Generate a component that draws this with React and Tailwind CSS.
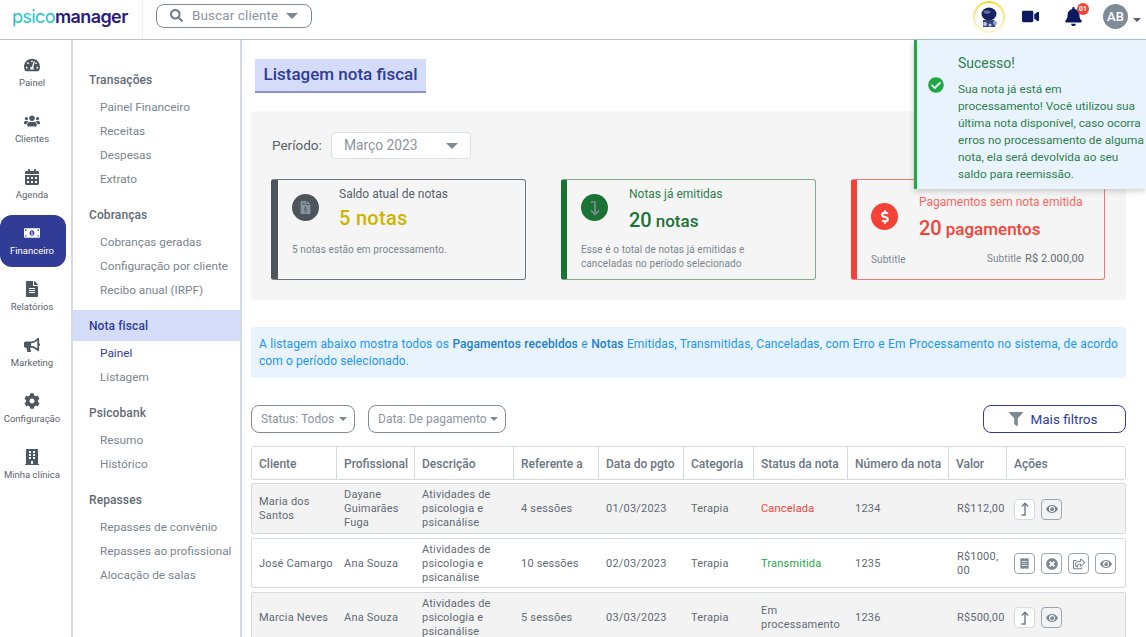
import {
  FaTachometerAlt, FaUsers, FaCalendarAlt, FaMoneyBillAlt, FaFileAlt, FaBullhorn, FaCog, FaBuilding,
  FaSearch, FaVideo, FaBell, FaFilter, FaEye, FaTimesCircle, FaRegShareSquare, FaCheckCircle, FaDollarSign, FaFileInvoiceDollar, FaReceipt,
} from 'react-icons/fa'

const rail = [
  { icon: FaTachometerAlt, label: 'Painel' },
  { icon: FaUsers, label: 'Clientes' },
  { icon: FaCalendarAlt, label: 'Agenda' },
  { icon: FaMoneyBillAlt, label: 'Financeiro', active: true },
  { icon: FaFileAlt, label: 'Relatórios' },
  { icon: FaBullhorn, label: 'Marketing' },
  { icon: FaCog, label: 'Configuração' },
  { icon: FaBuilding, label: 'Minha clínica' },
]

const menu = [
  { title: 'Transações', items: ['Painel Financeiro', 'Receitas', 'Despesas', 'Extrato'] },
  { title: 'Cobranças', items: ['Cobranças geradas', 'Configuração por cliente', 'Recibo anual (IRPF)'] },
  { title: 'Nota fiscal', items: ['Painel', 'Listagem'], active: true },
  { title: 'Psicobank', items: ['Resumo', 'Histórico'] },
  { title: 'Repasses', items: ['Repasses de convênio', 'Repasses ao profissional', 'Alocação de salas'] },
]

const headers = ['Cliente', 'Profissional', 'Descrição', 'Referente a', 'Data do pgto', 'Categoria', 'Status da nota', 'Número da nota', 'Valor', 'Ações']

const rows = [
  { cliente: 'Maria dos Santos', prof: 'Dayane Guimarães Fuga', ref: '4 sessões', data: '01/03/2023', status: 'Cancelada', statusClass: 'text-[#f44336]', num: '1234', valor: 'R$112,00', actions: 'short', bg: 'bg-[#f3f3f3]', h: 'h-[51px]' },
  { cliente: 'José Camargo', prof: 'Ana Souza', ref: '10 sessões', data: '02/03/2023', status: 'Transmitida', statusClass: 'text-[#22a745]', num: '1235', valor: 'R$1000,\u200b00', actions: 'long', bg: 'bg-white', h: 'h-[50px]' },
  { cliente: 'Marcia Neves', prof: 'Ana Souza', ref: '5 sessões', data: '03/03/2023', status: 'Em processamento', statusClass: 'text-[#5f6a74]', num: '1236', valor: 'R$500,00', actions: 'short', bg: 'bg-[#f3f3f3]', h: 'h-[50px]' },
]

const gridCols = 'grid grid-cols-[85px_78px_99px_85px_85px_70px_94px_101px_58px_1fr]'

function Caret({ color }) {
  return <span className={`ml-auto inline-block w-0 h-0 border-x-[6px] border-x-transparent border-t-[6px] ${color}`} />
}

function SmallCaret({ color }) {
  return <span className={`ml-auto inline-block w-0 h-0 border-x-[4px] border-x-transparent border-t-[4px] ${color}`} />
}

function ActionBtn({ children, strong }) {
  return (
    <span className={`flex items-center justify-center w-[21px] h-[21px] rounded-[4px] border text-[#7b8791] ${strong ? 'border-[#9aa5ae]' : 'border-[#d5dade] bg-white'}`}>
      {children}
    </span>
  )
}

function UpArrow() {
  return (
    <svg width="14" height="16" viewBox="0 0 14 16" fill="none" stroke="#6f7b85" strokeWidth="1.4">
      <path d="M3.5 14H7V2.5M3.8 5.5 7 2.2l3.2 3.3" />
    </svg>
  )
}

function Actions({ kind }) {
  if (kind === 'short') {
    return (
      <div className="flex gap-[6px]">
        <ActionBtn><UpArrow /></ActionBtn>
        <ActionBtn strong><FaEye size={12} /></ActionBtn>
      </div>
    )
  }
  return (
    <div className="flex gap-[6px]">
      <ActionBtn strong><FaReceipt size={11} /></ActionBtn>
      <ActionBtn strong><FaTimesCircle size={12} /></ActionBtn>
      <ActionBtn strong><FaRegShareSquare size={12} /></ActionBtn>
      <ActionBtn strong><FaEye size={12} /></ActionBtn>
    </div>
  )
}

function Astronaut() {
  return (
    <div className="w-8 h-8 rounded-full p-[2px] bg-linear-to-b from-[#f5d92e] to-[#fdf6d0]">
      <div className="w-full h-full rounded-full bg-white flex items-center justify-center">
        <svg width="24" height="24" viewBox="0 0 24 24">
          <ellipse cx="12" cy="9" rx="7.5" ry="6.5" fill="#1a2360" />
          <ellipse cx="10" cy="7" rx="3.5" ry="1.8" fill="#5f6eaa" />
          <path d="M6 15h11l2 3-1 4H6z" fill="#39447f" />
          <circle cx="8" cy="19" r="2" fill="#c3cae2" />
          <circle cx="13" cy="20" r="1.5" fill="#c3cae2" />
          <circle cx="18" cy="18" r="2" fill="#9aa5cc" />
        </svg>
      </div>
    </div>
  )
}

export default function App() {
  return (
    <div className="h-screen overflow-hidden relative flex flex-col bg-white font-['Roboto',sans-serif] text-[#5f6a74]">
      {/* Top bar */}
      <header className="h-10 shrink-0 flex items-center border-b border-[#b9c3cc]">
        <div className="w-[143px] h-full pl-3 pb-[6px] flex items-center border-r border-[#eef0f2] font-['Inter',sans-serif] text-[18px] font-semibold tracking-[-0.6px]">
          <span className="text-[#1cc6cf] font-normal">psico</span>
          <span className="text-[#2a1a80]">manager</span>
        </div>
        <div className="ml-[13px] mb-2 w-[156px] h-6 flex items-center rounded-lg border border-[#7f8b96] pl-[13px] pr-[13px] text-[#8a95a0]">
          <FaSearch size={13} className="text-[#6f7b86]" />
          <span className="ml-[9px] text-[13.5px] tracking-[0.1px]">Buscar cliente</span>
          <Caret color="border-t-[#7c8893]" />
        </div>
        <div className="ml-auto flex items-center pr-[5px] mb-[6px]">
          <Astronaut />
          <FaVideo size={17} className="ml-[17px] text-[#0b1a5e]" />
          <div className="relative ml-[25px]">
            <FaBell size={19} className="text-[#0b1a5e]" />
            <span className="absolute -top-[4px] -right-[6px] w-3 h-3 rounded-full bg-[#f44336] text-white text-[7px] font-bold leading-3 text-center">01</span>
          </div>
          <div className="ml-[20px] w-[25px] h-[25px] rounded-full bg-[#7f8c97] text-white text-[13px] font-medium flex items-center justify-center">AB</div>
          <span className="ml-[5px] w-2"><SmallCaret color="border-t-[#56616b]" /></span>
        </div>
      </header>

      <div className="flex flex-1 min-h-0">
        {/* Icon rail */}
        <nav className="w-[73px] shrink-0 border-r-2 border-[#d3dae3] pt-[7px] pr-[5px] flex flex-col gap-1">
          {rail.map(({ icon: Icon, label, active }) => (
            <div key={label} className={`h-[52px] pr-[2px] pt-[2px] flex flex-col items-center justify-center gap-[3px] text-[9.5px] ${active ? 'bg-[#303c95] text-white rounded-xl' : 'text-[#59646e]'}`}>
              <Icon size={16} className={active ? 'text-white' : 'text-[#4d5760]'} />
              <span>{label}</span>
            </div>
          ))}
        </nav>

        {/* Secondary menu */}
        <aside className="w-[169px] shrink-0 border-r-2 border-[#d3dae3] pt-6">
          {menu.map((group) => (
            <div key={group.title} className="mb-2">
              <div className={`h-[31px] pl-4 flex items-center text-[12px] font-medium tracking-[0.1px] ${group.active ? 'bg-[#d5dcfa] text-[#303c95]' : 'text-[#5f6a74]'}`}>
                {group.title}
              </div>
              {group.items.map((item, i) => (
                <div key={item} className={`h-6 pl-[27px] pt-[1px] flex items-center text-[11.8px] ${group.active && i === 0 ? 'text-[#303c95]' : 'text-[#7a858f]'}`}>
                  {item}
                </div>
              ))}
            </div>
          ))}
        </aside>

        {/* Content */}
        <main className="flex-1 min-w-0 pl-[9px] pr-5 pt-[19px]">
          <h1 className="ml-1 w-[171px] h-[34px] bg-[#d5dcfa] border-b-2 border-[#8a93c9] text-[#303c95] text-[17px] font-medium flex items-center justify-center">
            Listagem nota fiscal
          </h1>

          <section className="mt-[18px] h-[189px] bg-[#f5f5f5] rounded-[4px] px-5 pt-[21px]">
            <div className="flex items-center h-[27px]">
              <span className="ml-[1px] w-[50px] whitespace-nowrap text-[13.5px] text-[#56616b]">Período:</span>
              <div className="ml-[9px] w-[140px] h-[27px] bg-white rounded-[4px] border border-[#d9dee2] flex items-center pl-[12px] pr-3 text-[13.8px] text-[#8a95a0]">
                Março 2023
                <Caret color="border-t-[#7c8893]" />
              </div>
            </div>

            <div className="mt-5 flex justify-between pr-[1px]">
              <div className="w-[255px] h-[101px] rounded-[3px] border border-[#6b747c] border-l-[7px] border-l-[#4c555c] pl-[14px] pr-2 pt-[5px]">
                <div className="flex gap-[20px]">
                  <span className="mt-[9px] w-[27px] h-[27px] rounded-full bg-[#4c555c] flex items-center justify-center text-[#8592a0]">
                    <FaFileInvoiceDollar size={13} />
                  </span>
                  <div>
                    <div className="text-[12px] text-[#56616b]">Saldo atual de notas</div>
                    <div className="text-[20px] font-medium tracking-[0.3px] text-[#cdb400]">5 notas</div>
                  </div>
                </div>
                <p className="mt-[9px] text-[10px] tracking-[0.1px] text-[#7a858f]">5 notas estão em processamento.</p>
              </div>

              <div className="w-[255px] h-[101px] rounded-[3px] border border-[#7fae8c] border-l-[6px] border-l-[#1b7235] pl-[14px] pr-2 pt-[5px]">
                <div className="flex gap-[21px]">
                  <span className="mt-[9px] w-[27px] h-[27px] rounded-full bg-[#1b7235] flex items-center justify-center">
                    <svg width="14" height="16" viewBox="0 0 14 16" fill="none" stroke="#7f8c97" strokeWidth="1.6">
                      <path d="M3 2h4v12M3 10.5 7 14.5l4-4" />
                    </svg>
                  </span>
                  <div>
                    <div className="text-[12px] text-[#2e8049]">Notas já emitidas</div>
                    <div className="mt-[3px] font-medium text-[#1b7235] leading-7">
                      <span className="text-[20px]">20</span> <span className="text-[17px]">notas</span>
                    </div>
                  </div>
                </div>
                <p className="mt-[7px] w-[190px] text-[10px] leading-[14px] tracking-[0.1px] text-[#7a858f]">
                  Esse é o total de notas já emitidas e canceladas no período selecionado
                </p>
              </div>

              <div className="w-[254px] h-[101px] rounded-[3px] border border-[#f2776d] border-l-[6px] border-l-[#f44336] pl-[14px] pr-[20px] pt-[13px]">
                <div className="flex gap-[21px]">
                  <span className="mt-[10px] w-[27px] h-[27px] rounded-full bg-[#f44336] flex items-center justify-center text-white">
                    <FaDollarSign size={14} />
                  </span>
                  <div>
                    <div className="whitespace-nowrap text-[12px] text-[#f7685d]">Pagamentos sem nota emitida</div>
                    <div className="mt-[3px] font-medium text-[#f44336] leading-7">
                      <span className="text-[20px]">20</span> <span className="text-[17px]">pagamentos</span>
                    </div>
                  </div>
                </div>
                <div className="mt-[7px] flex items-center justify-between text-[10px] tracking-[0.1px] text-[#7a858f]">
                  <span>Subtitle</span>
                  <span>Subtitle <span className="ml-[1px] text-[11px] text-[#5f6a74]">R$ 2.000,00</span></span>
                </div>
              </div>
            </div>
          </section>

          <p className="mt-[27px] h-[51px] rounded-[3px] bg-[#e9f3fd] px-2 pt-[9px] text-[12px] tracking-[0.08px] leading-[17px] text-[#2196f3] text-justify">
            A listagem abaixo mostra todos os <b className="font-medium text-[#1d7fd0]">Pagamentos recebidos</b> e <b className="font-medium text-[#1d7fd0]">Notas</b> Emitidas, Transmitidas, Canceladas, com Erro e Em Processamento no sistema, de acordo com o período selecionado.
          </p>

          <div className="mt-[27px] flex items-center h-7">
            <div className="w-[104px] h-7 rounded-lg border border-[#7f8b96] pl-[9px] pr-[7px] flex items-center whitespace-nowrap text-[12px] text-[#8a95a0]">
              Status: Todos
              <SmallCaret color="border-t-[#7c8893]" />
            </div>
            <div className="ml-[13px] w-[138px] h-7 rounded-lg border border-[#7f8b96] pl-[9px] pr-[7px] flex items-center whitespace-nowrap text-[12px] text-[#8a95a0]">
              Data: De pagamento
              <SmallCaret color="border-t-[#7c8893]" />
            </div>
            <div className="ml-auto w-[143px] h-7 pr-[2px] rounded-lg border border-[#303c95] flex items-center justify-center gap-[7px] text-[13.5px] text-[#303c95]">
              <FaFilter size={14} className="text-[#7b8791]" />
              Mais filtros
            </div>
          </div>

          {/* Table */}
          <div className="mt-[13px] text-[11px] tracking-[0.2px] leading-[14px] text-[#5f6a74]">
            <div className={`${gridCols} h-[34px] rounded-[3px] border border-[#d5dade] text-[12px] font-medium text-[#6a757f] tracking-normal`}>
              {headers.map((h, i) => (
                <div key={h} className={`flex items-center pl-[7px] pt-[1px] ${i < headers.length - 1 ? 'border-r border-[#d5dade]' : ''}`}>{h}</div>
              ))}
            </div>
            <div className="mt-[3px] flex flex-col gap-1">
              {rows.map((r) => (
                <div key={r.num} className={`${gridCols} ${r.h} ${r.bg} pt-[1px] rounded-[2px] border border-[#d5dade] items-center`}>
                  <div className="pl-[7px]">{r.cliente}</div>
                  <div className="pl-[7px]">{r.prof}</div>
                  <div className="pl-[7px] pr-1">Atividades de psicologia e psicanálise</div>
                  <div className="pl-[7px]">{r.ref}</div>
                  <div className="pl-[7px]">{r.data}</div>
                  <div className="pl-[7px]">Terapia</div>
                  <div className={`pl-[7px] pr-1 ${r.statusClass}`}>{r.status}</div>
                  <div className="pl-[7px]">{r.num}</div>
                  <div className="pl-[8px]">{r.valor}</div>
                  <div className="pl-[7px]"><Actions kind={r.actions} /></div>
                </div>
              ))}
            </div>
          </div>
        </main>
      </div>

      {/* Toast */}
      <div className="absolute top-10 right-0 w-[232px] h-[149px] bg-[#e9f3fd] border-l-[3px] border-[#22a745] shadow-[0_2px_6px_rgba(0,0,0,0.2)] flex">
        <FaCheckCircle size={16} className="mt-[37px] ml-[11px] shrink-0 text-[#22a745]" />
        <div className="ml-[14px] pt-[15px] text-[#2e8049]">
          <div className="text-[14px] leading-4">Sucesso!</div>
          <p className="mt-[10px] text-[11.8px] leading-[17px]">
            Sua nota já está em processamento! Você utilizou sua última nota disponível, caso ocorra erros no processamento de alguma nota, ela será devolvida ao seu saldo para reemissão.
          </p>
        </div>
      </div>
    </div>
  )
}
